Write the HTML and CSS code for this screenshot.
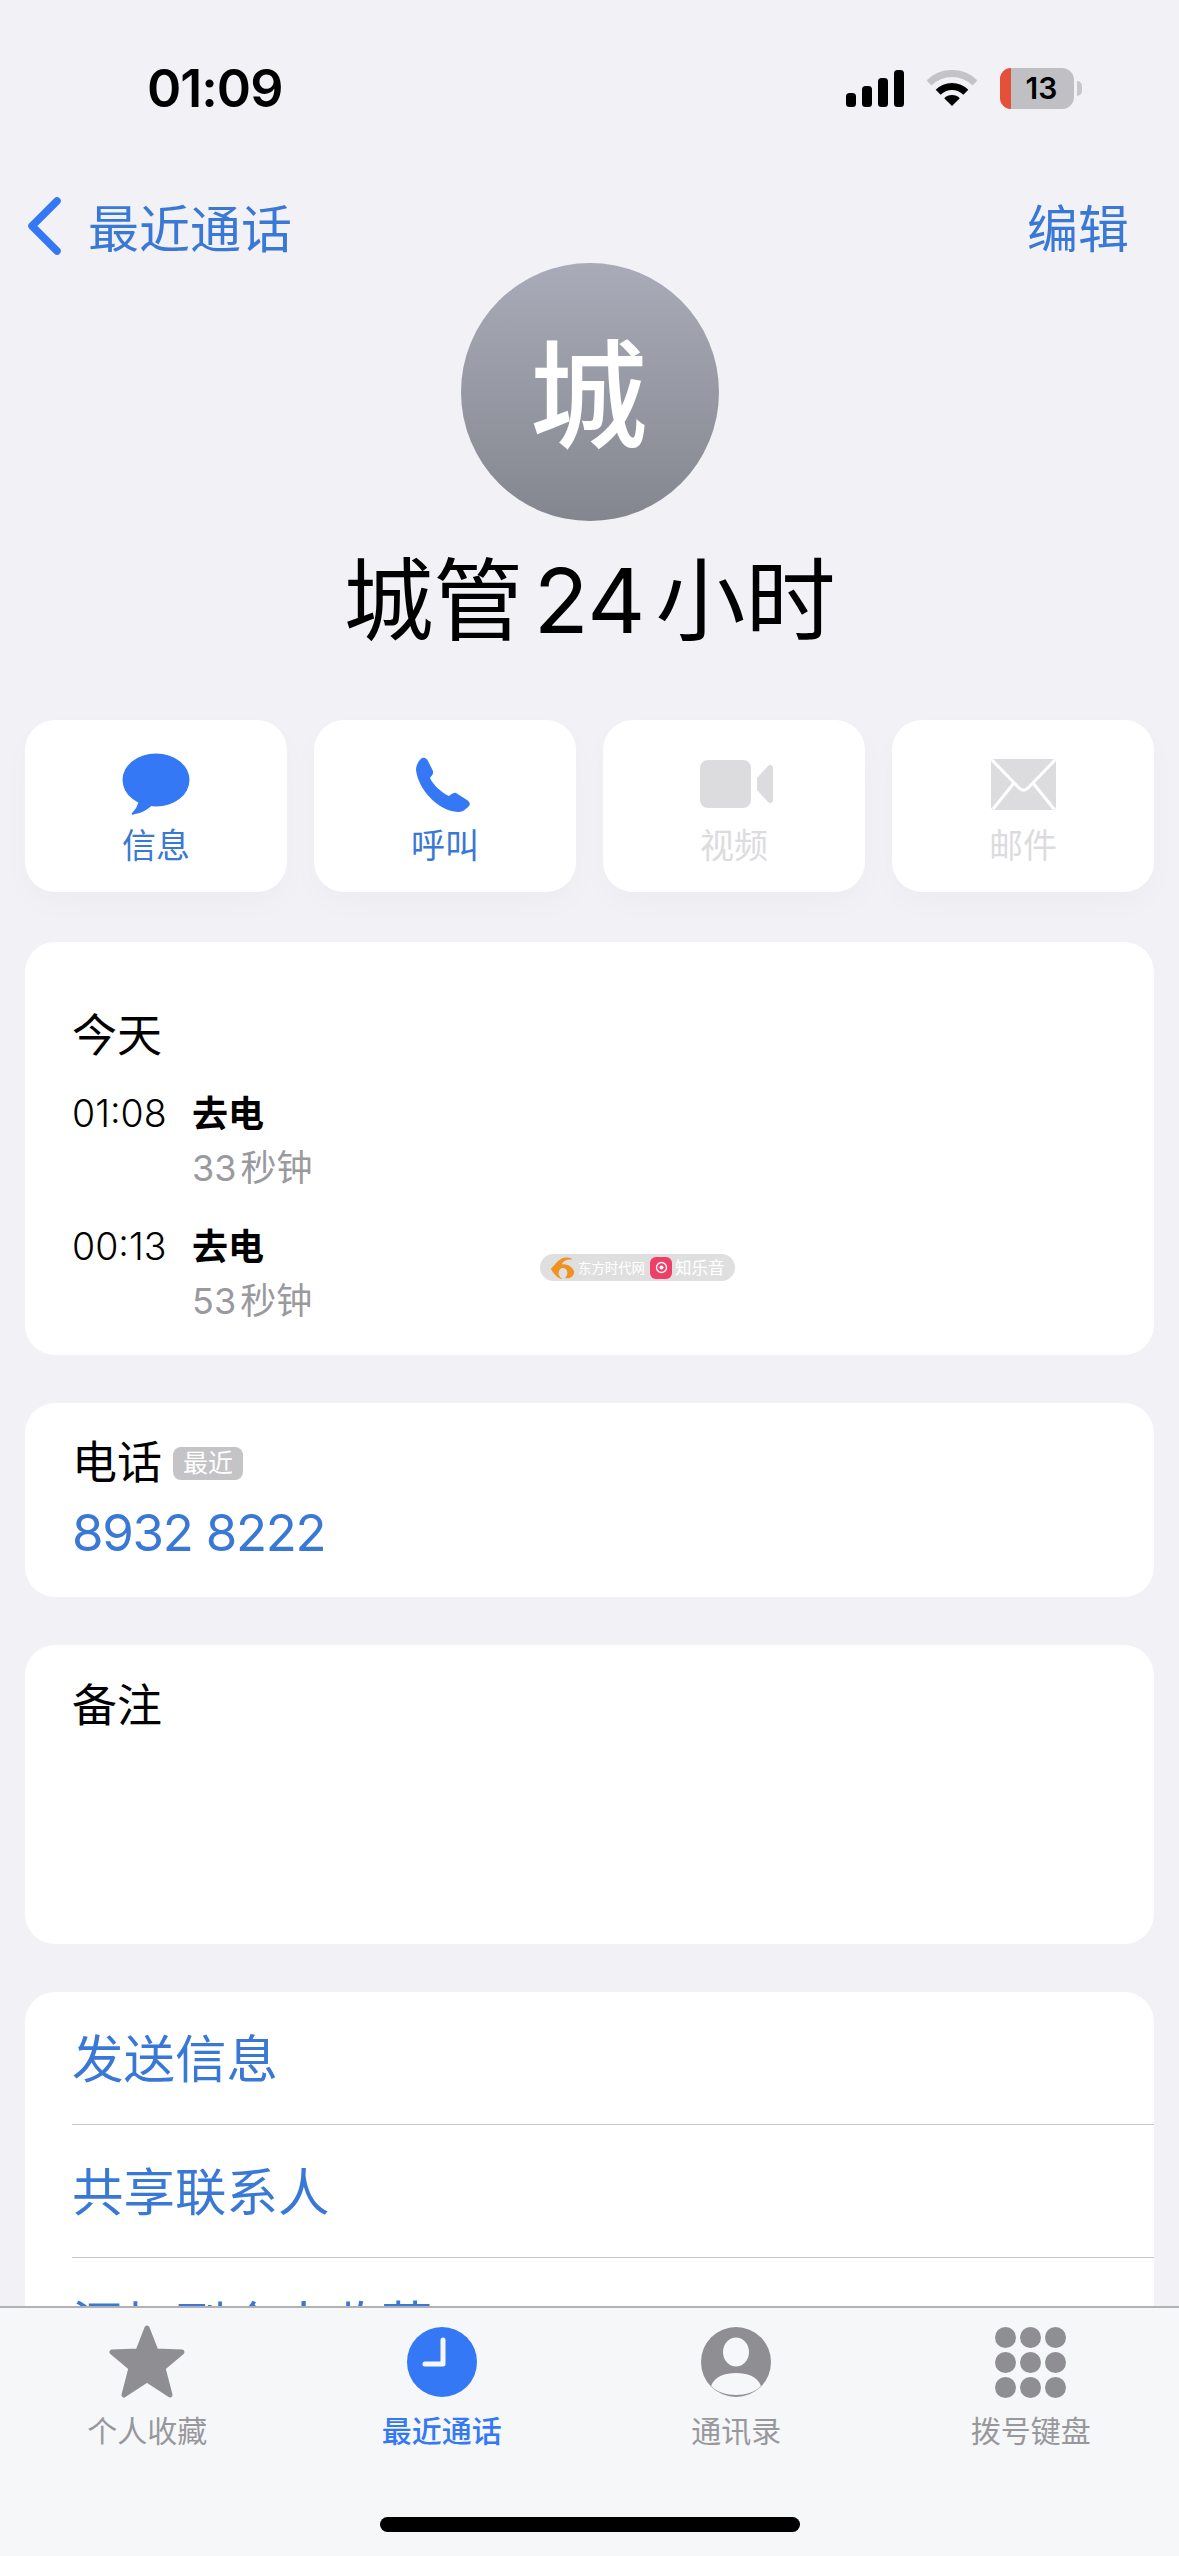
FILE: index.html
```html
<!DOCTYPE html>
<html lang="zh-CN">
<head>
    <meta charset="UTF-8">
    <meta name="viewport" content="width=device-width, initial-scale=1.0">
    <title>城管 24 小时</title>
    <link rel="stylesheet" href="styles.css">
</head>
<body>
    <div class="phone">
        <div class="status-bar">
            <div class="clock">01:09</div>
            <div class="status-icons">
                <svg class="signal" width="58" height="37" viewBox="0 0 58 37">
                    <rect x="0" y="23" width="10" height="14" rx="3.5"/>
                    <rect x="16" y="16" width="10" height="21" rx="3.5"/>
                    <rect x="32" y="8" width="10" height="29" rx="3.5"/>
                    <rect x="48" y="0" width="10" height="37" rx="3.5"/>
                </svg>
                <svg class="wifi" width="50" height="37" viewBox="0 0 50 37">
                    <path d="M2 13 A32.5 32.5 0 0 1 48 13" fill="none" stroke="#c4c4c7" stroke-width="7"/>
                    <path d="M11.2 22.2 A19.5 19.5 0 0 1 38.8 22.2" fill="none" stroke="#000" stroke-width="7"/>
                    <path d="M25 36 L17.2 28.2 A11 11 0 0 1 32.8 28.2 Z"/>
                </svg>
                <div class="battery">
                    <div class="battery-level"></div>
                    <div class="battery-num">13</div>
                    <div class="battery-cap"></div>
                </div>
            </div>
        </div>

        <div class="nav">
            <div class="nav-back">
                <svg width="34" height="58" viewBox="0 0 34 58">
                    <path d="M30 4 L5 29 L30 54" fill="none" stroke="#3478f6" stroke-width="7.5" stroke-linecap="round" stroke-linejoin="round"/>
                </svg>
                <span>最近通话</span>
            </div>
            <div class="nav-edit">编辑</div>
        </div>

        <div class="contact">
            <div class="avatar">城</div>
            <div class="contact-name">城管 24 小时</div>
        </div>

        <div class="actions">
            <div class="action">
                <div class="action-icon">
                    <svg width="68" height="62" viewBox="0 0 68 62">
                        <ellipse cx="34" cy="27" rx="33.5" ry="26.5" fill="#3478f6"/>
                        <path d="M17 44 C17 52 13 57 10 60 C9 62 11 62 13 61 C20 60 27 56 31 51 Z" fill="#3478f6"/>
                    </svg>
                </div>
                <div class="action-label">信息</div>
            </div>
            <div class="action">
                <div class="action-icon icon-call">
                    <svg width="55" height="55" viewBox="0 0 55 55">
                        <path d="M6 1 C9 0 11 2 12 4 L17 14 C18 17 15 19 14 21 C17 28 26 36 33 39 C35 38 37 35 40 36 L51 43 C54 45 55 48 52 50 C49 53 46 55 42 55 C22 54 2 32 0 13 C0 8 3 3 6 1 Z" fill="#3478f6"/>
                    </svg>
                </div>
                <div class="action-label">呼叫</div>
            </div>
            <div class="action disabled">
                <div class="action-icon icon-video">
                    <svg width="73" height="48" viewBox="0 0 73 48">
                        <rect x="0" y="0" width="51" height="48" rx="8" fill="#dcdcde"/>
                        <path d="M57 18 L68 6 C70 4 73 5 73 8 L73 40 C73 43 70 44 68 42 L57 30 Z" fill="#dcdcde"/>
                    </svg>
                </div>
                <div class="action-label">视频</div>
            </div>
            <div class="action disabled">
                <div class="action-icon">
                    <svg width="65" height="51" viewBox="0 0 65 51">
                        <rect width="65" height="51" rx="4" fill="#dcdcde"/>
                        <path d="M1 1 L28 29 C31 32 34 32 37 29 L64 1 M2 50 L23 24 M63 50 L42 24" fill="none" stroke="#fff" stroke-width="3"/>
                    </svg>
                </div>
                <div class="action-label">邮件</div>
            </div>
        </div>

        <div class="card card-calls">
            <div class="card-title">今天</div>
            <div class="call">
                <div class="call-time">01:08</div>
                <div>
                    <div class="call-type">去电</div>
                    <div class="call-length">33 秒钟</div>
                </div>
            </div>
            <div class="call">
                <div class="call-time">00:13</div>
                <div>
                    <div class="call-type">去电</div>
                    <div class="call-length">53 秒钟</div>
                </div>
            </div>
            <div class="watermark">
                <svg width="25" height="24" viewBox="0 0 30 26" preserveAspectRatio="none">
                    <path d="M1 14 C6 10 9 4 17 2 C22 1 25 2 27 4 C21 3 16 5 14 9 C20 8 27 11 29 17 C29 22 24 25 18 24 C21 21 22 17 19 14 C16 12 12 13 11 16 C9 20 12 23 15 25 C9 24 5 20 1 14 Z" fill="#ee9322"/>
                </svg>
                <span class="watermark-text">东方时代网</span>
                <div class="watermark-badge">
                    <svg width="13" height="13" viewBox="0 0 13 13">
                        <circle cx="6.5" cy="6.5" r="5" fill="none" stroke="#fff" stroke-width="1.3"/>
                        <circle cx="6.5" cy="6.5" r="2" fill="#fff"/>
                    </svg>
                </div>
                <span class="watermark-text watermark-text-right">知乐音</span>
            </div>
        </div>

        <div class="card card-phone">
            <div class="phone-label">
                <span class="card-title">电话</span>
                <span class="badge">最近</span>
            </div>
            <div class="phone-number">8932 8222</div>
        </div>

        <div class="card card-notes">
            <div class="card-title">备注</div>
        </div>

        <div class="card card-links">
            <div class="link-row">发送信息</div>
            <div class="link-row">共享联系人</div>
            <div class="link-row">添加到个人收藏</div>
        </div>

        <div class="tabbar">
            <div class="tab">
                <div class="tab-icon">
                    <svg width="76" height="74" viewBox="0 0 76 74">
                        <polygon points="38,3 47,26 73,27 54,43 61,70 38,55 15,70 22,43 3,27 29,26" fill="#8e8e93" stroke="#8e8e93" stroke-width="5" stroke-linejoin="round"/>
                    </svg>
                </div>
                <div class="tab-label">个人收藏</div>
            </div>
            <div class="tab active">
                <div class="tab-icon">
                    <svg width="70" height="70" viewBox="0 0 70 70">
                        <circle cx="35" cy="35" r="35" fill="#3478f6"/>
                        <path d="M36 13 L36 37 L18 37" fill="none" stroke="#f6f7f9" stroke-width="5" stroke-linecap="round" stroke-linejoin="round"/>
                    </svg>
                </div>
                <div class="tab-label">最近通话</div>
            </div>
            <div class="tab">
                <div class="tab-icon">
                    <svg width="70" height="70" viewBox="0 0 70 70">
                        <circle cx="35" cy="35" r="35" fill="#8e8e93"/>
                        <ellipse cx="35" cy="25" rx="13" ry="14.5" fill="#f6f7f9"/>
                        <path d="M10 59 C14 49 24 46 35 46 C46 46 56 49 60 59 C54 65 45 68 35 68 C25 68 16 65 10 59 Z" fill="#f6f7f9"/>
                    </svg>
                </div>
                <div class="tab-label">通讯录</div>
            </div>
            <div class="tab">
                <div class="tab-icon">
                    <div class="keypad">
                        <i></i><i></i><i></i><i></i><i></i><i></i><i></i><i></i><i></i>
                    </div>
                </div>
                <div class="tab-label">拨号键盘</div>
            </div>
            <div class="home-indicator"></div>
        </div>
    </div>
</body>
</html>
```

FILE: styles.css
```css
* {
    box-sizing: border-box;
}
html, body {
    margin: 0;
    padding: 0;
}
body {
    font-family: Inter, "Noto Sans CJK SC", sans-serif;
    background: #f1f1f6;
    color: #000;
}
.phone {
    position: relative;
    width: 1179px;
    height: 2556px;
    overflow: hidden;
    background: #f1f1f6;
    padding: 0 25px;
}

/* status bar */
.status-bar {
    display: flex;
    justify-content: space-between;
    align-items: center;
    height: 176px;
    padding: 0 80px 0 122px;
}
.clock {
    font-size: 52px;
    font-weight: 600;
    letter-spacing: -1px;
}
.status-icons {
    display: flex;
    align-items: center;
    gap: 23px;
}
.battery {
    position: relative;
    width: 74px;
    height: 41px;
    border-radius: 12px;
    background: #c0c0c4;
    display: flex;
    align-items: center;
    justify-content: center;
}
.battery-level {
    position: absolute;
    left: 0;
    top: 0;
    width: 11px;
    height: 41px;
    background: #e4503a;
    border-radius: 12px 0 0 12px;
}
.battery-num {
    font-size: 30px;
    font-weight: 600;
    padding-left: 9px;
}
.battery-cap {
    position: absolute;
    right: -8px;
    top: 13px;
    width: 5px;
    height: 15px;
    background: #c8c8cb;
    border-radius: 0 5px 5px 0;
}

/* nav */
.nav {
    display: flex;
    justify-content: space-between;
    align-items: center;
    height: 73px;
    margin-top: 13px;
    margin-bottom: 1px;
    font-size: 51px;
    color: #3a78d6;
    padding-right: 25px;
}
.nav-back {
    display: flex;
    align-items: center;
    gap: 27px;
    padding-left: 2px;
}

/* contact header */
.contact {
    display: flex;
    flex-direction: column;
    align-items: center;
}
.avatar {
    width: 258px;
    height: 258px;
    border-radius: 50%;
    background: linear-gradient(#a9acb8, #84868f);
    color: #fff;
    font-size: 118px;
    font-weight: 500;
    display: flex;
    align-items: center;
    justify-content: center;
    padding: 0 2px 10px 0;
}
.contact-name {
    margin-top: 35px;
    margin-bottom: -3px;
    height: 90px;
    line-height: 90px;
    font-size: 90px;
    word-spacing: -15px;
}

/* action buttons */
.actions {
    display: grid;
    grid-template-columns: repeat(4, 262px);
    gap: 27px;
    margin-top: 77px;
}
.action {
    height: 172px;
    background: #fff;
    border-radius: 30px;
    box-shadow: 0 12px 30px rgba(0, 0, 0, 0.025);
    display: flex;
    flex-direction: column;
    align-items: center;
    color: #3a78d6;
    padding-top: 32px;
}
.action-icon {
    height: 64px;
    display: flex;
    align-items: center;
    justify-content: center;
}
.icon-call {
    padding-right: 3px;
}
.icon-video {
    padding-left: 4px;
}
.action-label {
    margin-top: 8px;
    font-size: 34px;
    line-height: 44px;
}
.action.disabled {
    color: #dcdcde;
}

/* cards */
.card {
    position: relative;
    background: #fff;
    border-radius: 30px;
    width: 1129px;
    margin-top: 48px;
}
.actions + .card {
    margin-top: 50px;
}
.card-title {
    font-size: 45px;
    line-height: 44px;
}
.card-calls {
    height: 413px;
    padding: 72px 47px 0;
}
.call {
    display: flex;
    margin-bottom: 25px;
}
.card-title + .call {
    margin-top: 29px;
}
.call-time {
    width: 120px;
    font-size: 37.5px;
    font-weight: 300;
    line-height: 54px;
}
.call-type {
    font-size: 36px;
    font-weight: 700;
    line-height: 54px;
}
.call-length {
    font-size: 36px;
    line-height: 54px;
    color: #9a9a9e;
    word-spacing: -6px;
}
.watermark {
    position: absolute;
    left: 515px;
    top: 312px;
    width: 195px;
    height: 27px;
    border-radius: 14px;
    background: #dfdfe0;
    display: flex;
    align-items: center;
    gap: 3px;
    padding: 0 0 0 10px;
}
.watermark-text {
    width: 67px;
    font-size: 13.4px;
    line-height: 20px;
    color: #fff;
    white-space: nowrap;
}
.watermark-text-right {
    width: 50px;
    font-size: 16.5px;
}
.watermark-badge {
    width: 22px;
    height: 22px;
    margin-left: 2px;
    border-radius: 6px;
    background: #ee3f68;
    display: flex;
    align-items: center;
    justify-content: center;
    flex-shrink: 0;
}
.card-phone {
    height: 194px;
    padding: 38px 47px 0;
}
.phone-label {
    display: flex;
    align-items: center;
    gap: 11px;
    height: 44px;
}
.badge {
    width: 70px;
    height: 33px;
    border-radius: 8px;
    background: #c4c4c7;
    color: #fff;
    font-size: 25px;
    line-height: 33px;
    text-align: center;
}
.phone-number {
    margin-top: 18px;
    font-size: 51px;
    letter-spacing: -1.3px;
    line-height: 60px;
    color: #3a78d6;
}
.card-notes {
    height: 299px;
    padding: 39px 47px 0;
}
.card-links {
    padding-left: 47px;
    font-size: 51.5px;
    color: #3a78d6;
}
.link-row {
    height: 133px;
    line-height: 134px;
    border-bottom: 1px solid #c6c6c8;
}

/* tab bar */
.tabbar {
    position: absolute;
    left: 0;
    bottom: 0;
    width: 1179px;
    height: 250px;
    background: #f6f7f9;
    border-top: 2px solid #b2b2b4;
    display: flex;
    align-items: flex-start;
    padding: 16px 1px 0 0;
}
.tab {
    flex: 1;
    display: flex;
    flex-direction: column;
    align-items: center;
    color: #98989c;
}
.tab.active {
    color: #3478f6;
}
.tab.active .tab-label {
    font-weight: 500;
}
.tab-icon {
    height: 76px;
    display: flex;
    align-items: center;
    justify-content: center;
}
.tab-label {
    margin-top: 11px;
    font-size: 30px;
    line-height: 40px;
}
.keypad {
    display: grid;
    grid-template-columns: repeat(3, 21px);
    grid-auto-rows: 21px;
    gap: 4px;
}
.keypad i {
    border-radius: 50%;
    background: #8e8e93;
}
.home-indicator {
    position: absolute;
    left: 380px;
    bottom: 24px;
    width: 420px;
    height: 15px;
    border-radius: 8px;
    background: #000;
}
```
